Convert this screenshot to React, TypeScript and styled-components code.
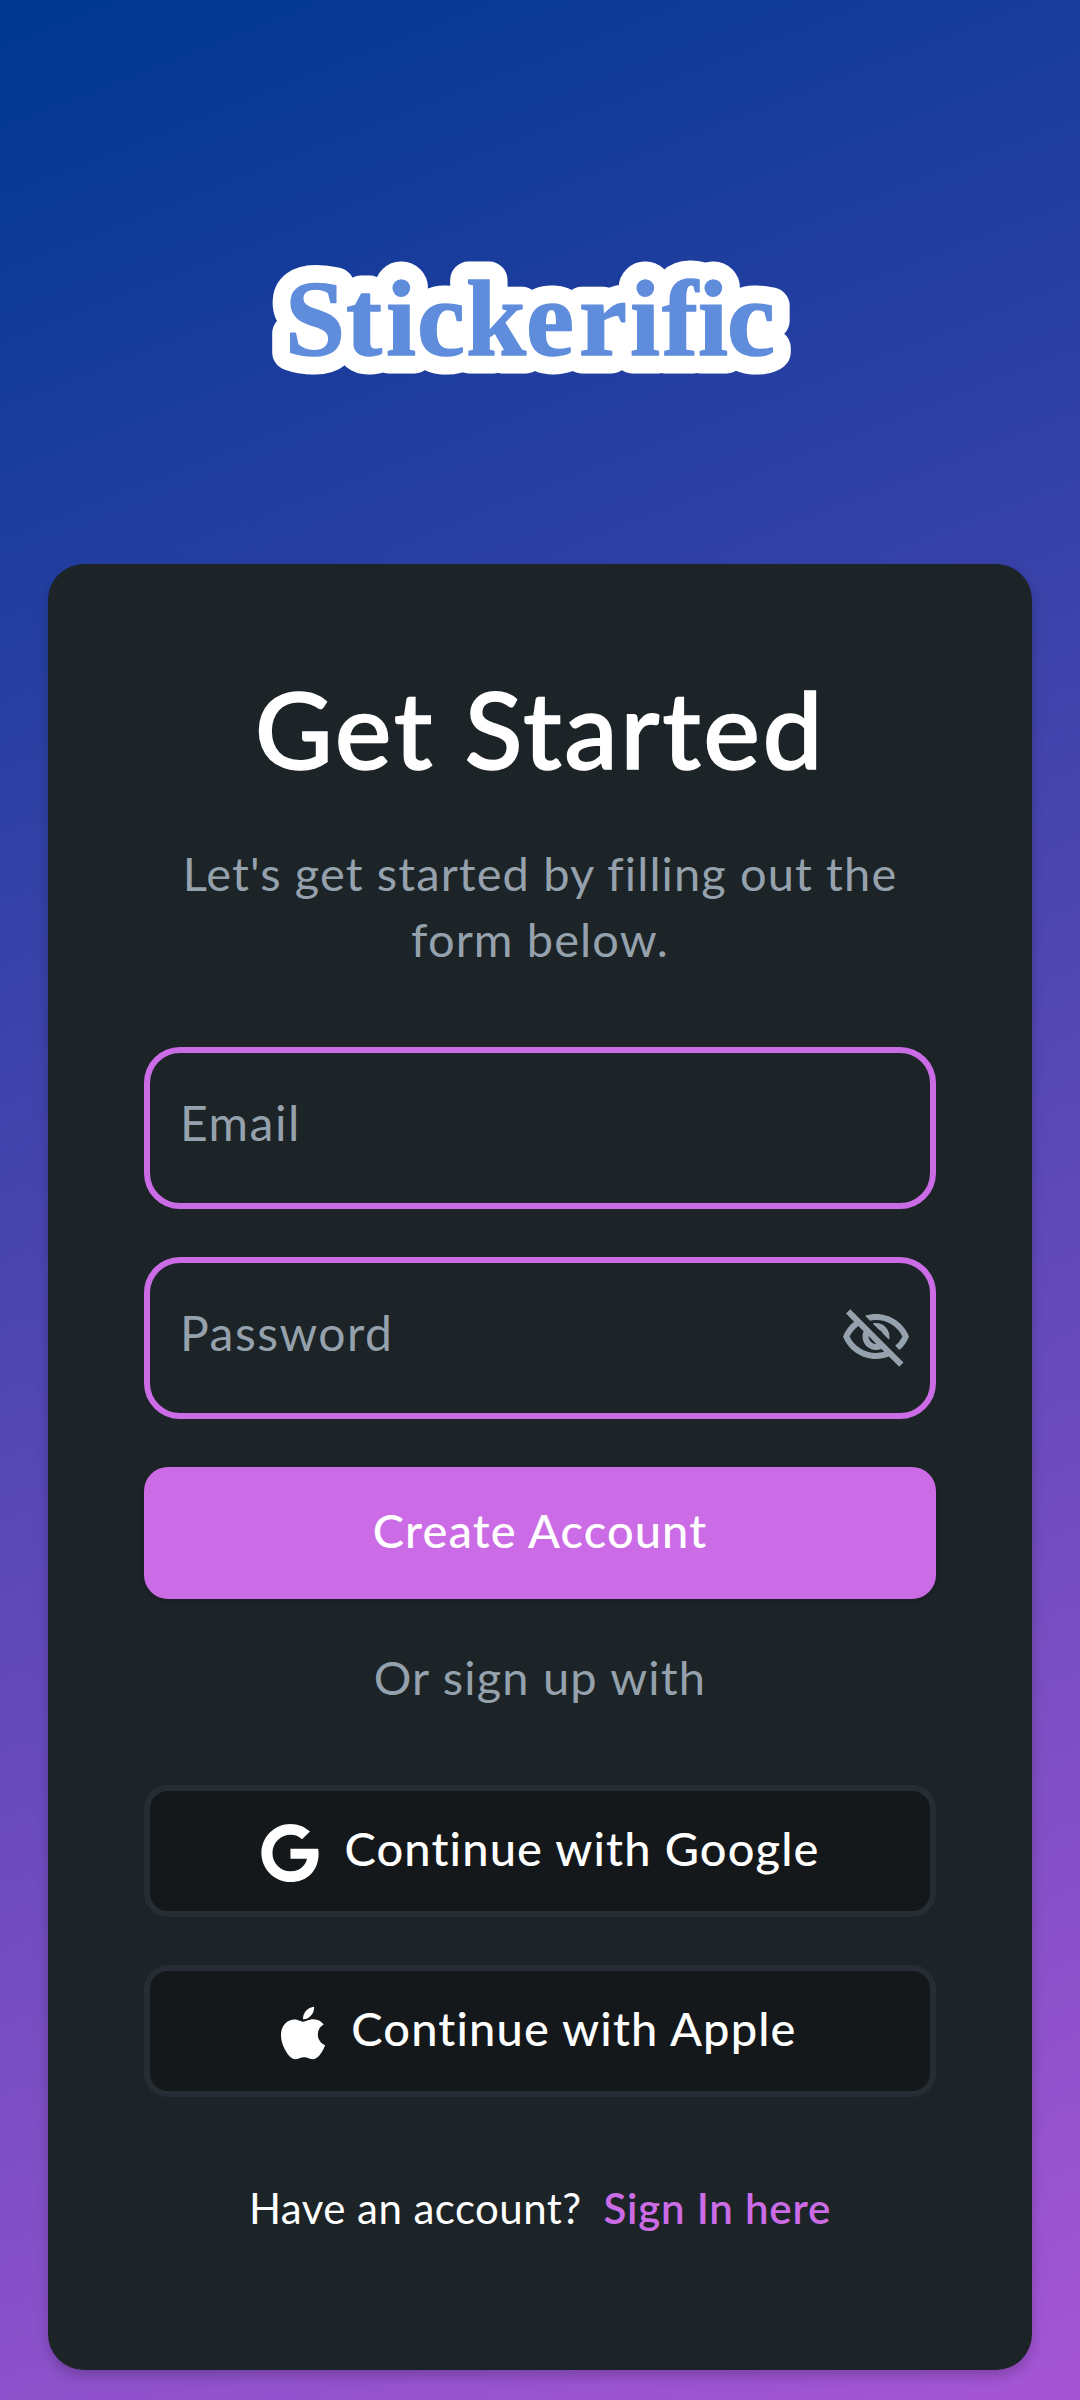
import { useState } from 'react'
import styled, { createGlobalStyle } from 'styled-components'
import { FaApple, FaGoogle } from 'react-icons/fa'
import { MdOutlineVisibility, MdOutlineVisibilityOff } from 'react-icons/md'

const GlobalStyle = createGlobalStyle`
  * {
    box-sizing: border-box;
  }

  body {
    margin: 0;
  }
`

const Page = styled.main`
  display: flex;
  flex-direction: column;
  align-items: center;
  height: 2400px;
  padding: 0 48px;
  background: linear-gradient(158.6deg, #003892 1%, #a455d4 99%);
  font-family: Lato, sans-serif;
`

const LogoArea = styled.header`
  display: flex;
  align-items: center;
  justify-content: center;
  width: 100%;
  height: 564px;
  padding-top: 72px;
`

const Card = styled.section`
  display: flex;
  flex-direction: column;
  align-items: center;
  width: 100%;
  height: 1806px;
  padding: 96px;
  border-radius: 36px;
  background: #1d2428;
  box-shadow: 0 6px 12px rgba(0, 0, 0, 0.2);
`

const Title = styled.h1`
  margin: 3px 0 0;
  color: #fff;
  font-size: 107px;
  font-weight: 500;
  line-height: 130px;
  letter-spacing: 2.6px;
  white-space: nowrap;
  -webkit-text-stroke: 1.5px #fff;
`

const Subtitle = styled.p`
  width: 760px;
  margin: 47px 0 0;
  color: #95a1ac;
  font-size: 47px;
  line-height: 66px;
  letter-spacing: 1.1px;
  text-align: center;
`

const Form = styled.form`
  display: flex;
  flex-direction: column;
  gap: 48px;
  width: 100%;
  margin-top: 75px;
`

const Field = styled.label`
  display: flex;
  align-items: center;
  height: 162px;
  padding: 0 18px 0 30px;
  border: 6px solid #cb6ce6;
  border-radius: 36px;
`

const Input = styled.input`
  flex: 1;
  min-width: 0;
  height: 66px;
  margin-bottom: 12px;
  padding: 0;
  border: 0;
  outline: 0;
  background: transparent;
  color: #fff;
  font-family: inherit;
  font-size: 48px;
  letter-spacing: 1.5px;

  &::placeholder {
    color: #95a1ac;
    opacity: 1;
  }
`

const EyeButton = styled.button`
  display: flex;
  padding: 0;
  border: 0;
  background: none;
  color: #95a1ac;
  font-size: 72px;
`

const SubmitButton = styled.button`
  height: 132px;
  padding: 0 0 6px;
  border: 0;
  border-radius: 24px;
  background: #cb6ce6;
  box-shadow: 0 2px 4px rgba(0, 0, 0, 0.2);
  color: #fff;
  font-family: inherit;
  font-size: 47px;
  font-weight: 500;
  letter-spacing: 1.1px;
`

const Divider = styled.p`
  margin: 45px 0 75px;
  color: #95a1ac;
  font-size: 47px;
  line-height: 66px;
  letter-spacing: 1.2px;
`

const SocialButton = styled.button<{ $gap: number; $shift?: number }>`
  display: flex;
  align-items: center;
  justify-content: center;
  gap: ${(p) => p.$gap}px;
  width: 100%;
  height: 132px;
  margin-bottom: 48px;
  padding: 0 ${(p) => p.$shift ?? 0}px 0 0;
  border: 6px solid #262d34;
  border-radius: 24px;
  background: #14181b;
  color: #fff;
  font-family: inherit;
  font-size: 47px;
  font-weight: 500;
  letter-spacing: 1.15px;

  svg {
    width: 60px;
    height: 60px;
    margin-top: 3px;
  }

  span {
    padding-bottom: 6px;
  }
`

const Footer = styled.p`
  display: flex;
  gap: 22px;
  margin: 33px 0 0;
  color: #fff;
  font-size: 42px;
  line-height: 60px;
  letter-spacing: 0.45px;
`

const SignInLink = styled.a`
  color: #cb6ce6;
  font-weight: 600;
  letter-spacing: 0.8px;
  text-decoration: none;
`

const LogoText = styled.text`
  font-family: 'Liberation Serif', serif;
  font-size: 108px;
  font-weight: 700;
  stroke-linejoin: round;
`

// each piece of the wordmark is spaced by hand, "fi" stays a ligature
const logoLetters = [
  { text: 'S', x: 25 },
  { text: 't', x: 86 },
  { text: 'i', x: 126 },
  { text: 'c', x: 157 },
  { text: 'k', x: 206 },
  { text: 'e', x: 266 },
  { text: 'r', x: 319 },
  { text: 'i', x: 370 },
  { text: 'fi', x: 402 },
  { text: 'c', x: 467 },
]

const outlineWidths = [37, 24, 12]

const Logo = () => {
  const letters = logoLetters.map(({ text, x }) => (
    <tspan key={x} x={x}>
      {text}
    </tspan>
  ))
  return (
    <svg width="560" height="150" viewBox="0 0 560 150">
      {outlineWidths.map((width) => (
        <LogoText
          key={width}
          y="112"
          fill="#fff"
          stroke="#fff"
          strokeWidth={width}
          aria-hidden
        >
          {letters}
        </LogoText>
      ))}
      <LogoText y="112" fill="#5f8ddc" stroke="#5f8ddc" strokeWidth="1.5">
        {letters}
      </LogoText>
    </svg>
  )
}

const App = () => {
  const [showPassword, setShowPassword] = useState(false)

  return (
    <>
      <GlobalStyle />
      <Page>
        <LogoArea>
          <Logo />
        </LogoArea>
        <Card>
          <Title>Get Started</Title>
          <Subtitle>
            Let&apos;s get started by filling out the form below.
          </Subtitle>
          <Form onSubmit={(e) => e.preventDefault()}>
            <Field>
              <Input type="email" placeholder="Email" />
            </Field>
            <Field>
              <Input
                type={showPassword ? 'text' : 'password'}
                placeholder="Password"
              />
              <EyeButton
                type="button"
                onClick={() => setShowPassword(!showPassword)}
              >
                {showPassword ? (
                  <MdOutlineVisibility />
                ) : (
                  <MdOutlineVisibilityOff />
                )}
              </EyeButton>
            </Field>
            <SubmitButton type="submit">Create Account</SubmitButton>
          </Form>
          <Divider>Or sign up with</Divider>
          <SocialButton $gap={24}>
            <FaGoogle />
            <span>Continue with Google</span>
          </SocialButton>
          <SocialButton $gap={18} $shift={10}>
            <FaApple />
            <span>Continue with Apple</span>
          </SocialButton>
          <Footer>
            Have an account?
            <SignInLink href="#">Sign In here</SignInLink>
          </Footer>
        </Card>
      </Page>
    </>
  )
}

export default App
